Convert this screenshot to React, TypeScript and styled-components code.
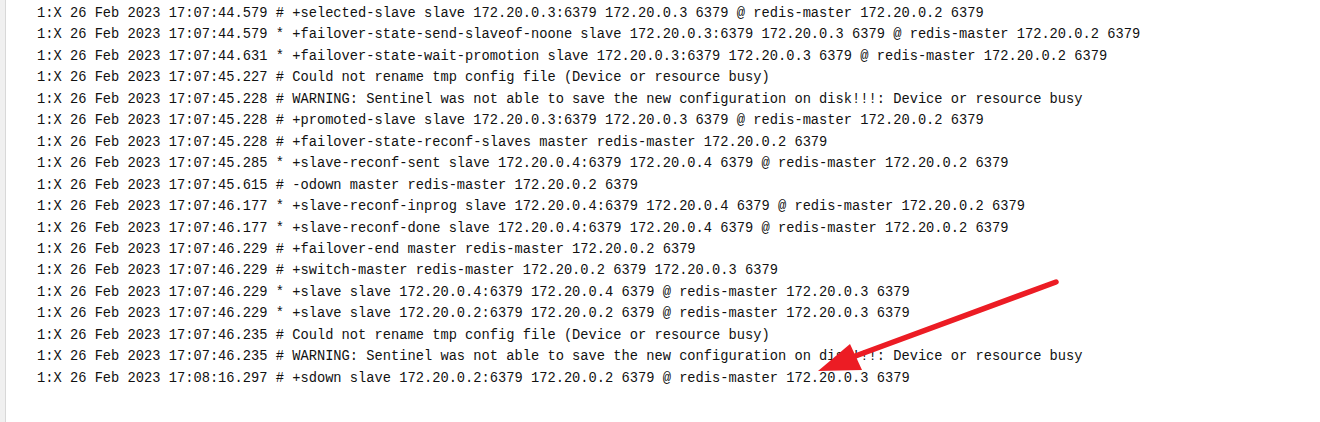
import React from "react";
import styled, { createGlobalStyle } from "styled-components";

const Global = createGlobalStyle`
  html, body { margin: 0; padding: 0; background: #ffffff; }
  body { width: 1320px; height: 422px; overflow: hidden; }
`;

const Frame = styled.div`
  position: relative;
  display: flex;
  width: 1320px;
  height: 422px;
  background: #ffffff;
`;

const Gutter = styled.div`
  width: 5px;
  flex: none;
  background: #f0f0f0;
  border-right: 1px solid #d8d8d8;
`;

const Log = styled.div`
  flex: 1;
  padding: 3px 0 0 31px;
  font-family: "Liberation Mono", "DejaVu Sans Mono", monospace;
  font-size: 13.73px;
  line-height: 21.45px;
  color: #111111;
`;

const Line = styled.div`
  white-space: pre;
`;

const Overlay = styled.svg`
  position: absolute;
  left: 0;
  top: 0;
  pointer-events: none;
`;

const lines = [
  "1:X 26 Feb 2023 17:07:44.579 # +selected-slave slave 172.20.0.3:6379 172.20.0.3 6379 @ redis-master 172.20.0.2 6379",
  "1:X 26 Feb 2023 17:07:44.579 * +failover-state-send-slaveof-noone slave 172.20.0.3:6379 172.20.0.3 6379 @ redis-master 172.20.0.2 6379",
  "1:X 26 Feb 2023 17:07:44.631 * +failover-state-wait-promotion slave 172.20.0.3:6379 172.20.0.3 6379 @ redis-master 172.20.0.2 6379",
  "1:X 26 Feb 2023 17:07:45.227 # Could not rename tmp config file (Device or resource busy)",
  "1:X 26 Feb 2023 17:07:45.228 # WARNING: Sentinel was not able to save the new configuration on disk!!!: Device or resource busy",
  "1:X 26 Feb 2023 17:07:45.228 # +promoted-slave slave 172.20.0.3:6379 172.20.0.3 6379 @ redis-master 172.20.0.2 6379",
  "1:X 26 Feb 2023 17:07:45.228 # +failover-state-reconf-slaves master redis-master 172.20.0.2 6379",
  "1:X 26 Feb 2023 17:07:45.285 * +slave-reconf-sent slave 172.20.0.4:6379 172.20.0.4 6379 @ redis-master 172.20.0.2 6379",
  "1:X 26 Feb 2023 17:07:45.615 # -odown master redis-master 172.20.0.2 6379",
  "1:X 26 Feb 2023 17:07:46.177 * +slave-reconf-inprog slave 172.20.0.4:6379 172.20.0.4 6379 @ redis-master 172.20.0.2 6379",
  "1:X 26 Feb 2023 17:07:46.177 * +slave-reconf-done slave 172.20.0.4:6379 172.20.0.4 6379 @ redis-master 172.20.0.2 6379",
  "1:X 26 Feb 2023 17:07:46.229 # +failover-end master redis-master 172.20.0.2 6379",
  "1:X 26 Feb 2023 17:07:46.229 # +switch-master redis-master 172.20.0.2 6379 172.20.0.3 6379",
  "1:X 26 Feb 2023 17:07:46.229 * +slave slave 172.20.0.4:6379 172.20.0.4 6379 @ redis-master 172.20.0.3 6379",
  "1:X 26 Feb 2023 17:07:46.229 * +slave slave 172.20.0.2:6379 172.20.0.2 6379 @ redis-master 172.20.0.3 6379",
  "1:X 26 Feb 2023 17:07:46.235 # Could not rename tmp config file (Device or resource busy)",
  "1:X 26 Feb 2023 17:07:46.235 # WARNING: Sentinel was not able to save the new configuration on disk!!!: Device or resource busy",
  "1:X 26 Feb 2023 17:08:16.297 # +sdown slave 172.20.0.2:6379 172.20.0.2 6379 @ redis-master 172.20.0.3 6379",
];

export default function App() {
  return (
    <>
      <Global />
      <Frame>
        <Gutter />
        <Log>
          {lines.map((l, i) => (
            <Line key={i}>{l}</Line>
          ))}
        </Log>
        <Overlay width="1320" height="422" viewBox="0 0 1320 422">
          <line
            x1="1056"
            y1="282"
            x2="850"
            y2="358"
            stroke="#ec1c24"
            strokeWidth="5.5"
            strokeLinecap="round"
          />
          <polygon points="818,371 850,344 862,370" fill="#ec1c24" />
        </Overlay>
      </Frame>
    </>
  );
}
